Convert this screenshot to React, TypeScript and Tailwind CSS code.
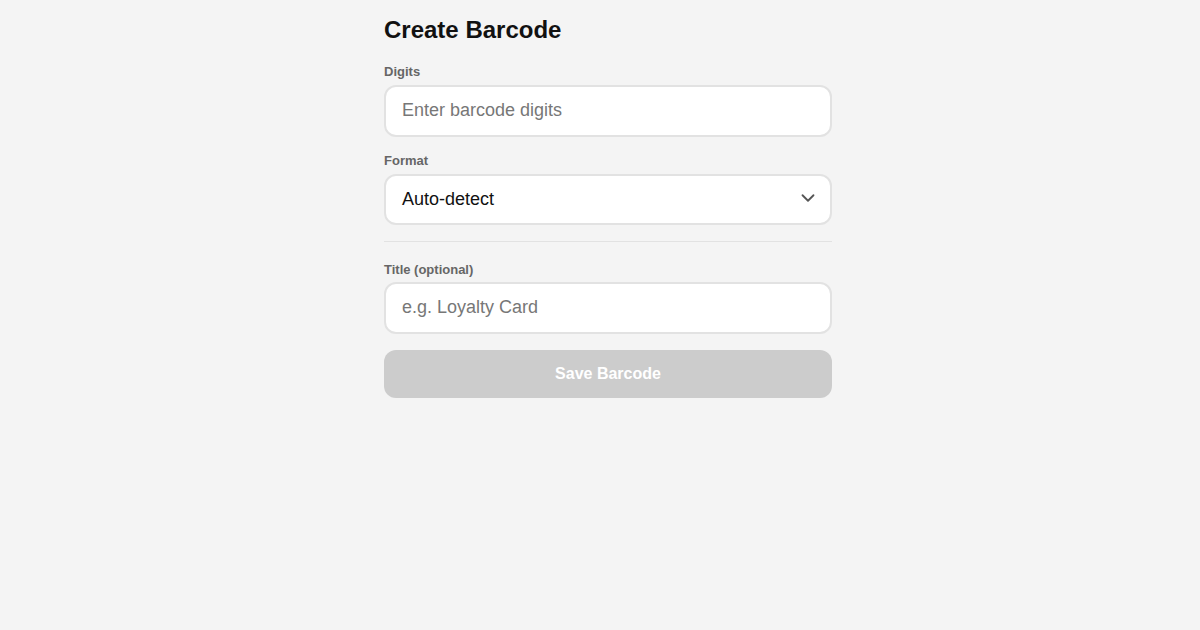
import React from "react";

export default function App() {
  return (
    <div className="min-h-[630px] w-full bg-[#f4f4f4] pl-[16px] font-['Liberation_Sans',Arial,sans-serif]">
      <div className="mx-auto w-[448px] pt-[15px]">
        <h1 className="text-[24px] leading-[29px] font-bold text-[#111111]">Create Barcode</h1>
        <div className="mt-[20px] flex flex-col">
          <label className="text-[13px] leading-[16px] font-bold text-[#666666]">Digits</label>
          <input
            placeholder="Enter barcode digits"
            className="mt-[5px] h-[52px] w-full rounded-[12px] border-2 border-[#e2e2e2] bg-white px-[16px] pb-[2px] text-[18px] text-[#111111] placeholder:text-[#777777] outline-none"
          />
          <label className="mt-[16px] text-[13px] leading-[16px] font-bold text-[#666666]">Format</label>
          <div className="relative mt-[5px]">
            <div className="flex h-[51px] w-full items-center rounded-[12px] border-2 border-[#e2e2e2] bg-white px-[16px] text-[18px] text-[#111111]">
              Auto-detect
            </div>
            <svg
              className="absolute right-[13px] top-[13px]"
              width="22"
              height="22"
              viewBox="0 0 24 24"
              fill="none"
              stroke="#555555"
              strokeWidth="2"
              strokeLinecap="round"
              strokeLinejoin="round"
            >
              <path d="M6 9l6 6 6-6" />
            </svg>
          </div>
          <div className="mt-[16px] h-px w-full bg-[#e2e2e2]" />
          <label className="mt-[20px] text-[13px] leading-[16px] font-bold text-[#666666]">Title (optional)</label>
          <input
            placeholder="e.g. Loyalty Card"
            className="mt-[4px] h-[52px] w-full rounded-[12px] border-2 border-[#e2e2e2] bg-white px-[16px] pb-[2px] text-[18px] text-[#111111] placeholder:text-[#777777] outline-none"
          />
          <button className="mt-[16px] h-[48px] w-full rounded-[12px] bg-[#cccccc] text-[16px] font-bold text-white">
            Save Barcode
          </button>
        </div>
      </div>
    </div>
  );
}
